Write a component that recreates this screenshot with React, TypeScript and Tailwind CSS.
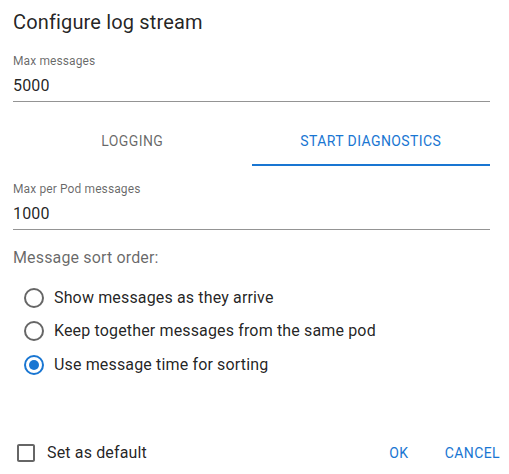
import React from "react";

function RadioIcon({ checked }: { checked: boolean }) {
  return (
    <svg width="24" height="24" viewBox="0 0 24 24" className="shrink-0">
      <circle
        cx="12"
        cy="12"
        r="9"
        fill="none"
        stroke={checked ? "#1976d2" : "rgba(0,0,0,0.6)"}
        strokeWidth="2"
      />
      {checked && <circle cx="12" cy="12" r="5" fill="#1976d2" />}
    </svg>
  );
}

function Field({ label, value }: { label: string; value: string }) {
  return (
    <div className="flex flex-col h-[48px] border-b border-black/[0.42]">
      <div className="text-[12px] leading-[14px] text-black/60 tracking-[0.00938em]">{label}</div>
      <div className="pt-[6px] text-[16px] leading-[23px] text-black/[0.87] tracking-[0.00938em]">{value}</div>
    </div>
  );
}

export default function App() {
  const options = [
    { label: "Show messages as they arrive", checked: false },
    { label: "Keep together messages from the same pod", checked: false },
    { label: "Use message time for sorting", checked: true },
  ];
  return (
    <div className="w-[509px] h-[474px] bg-white font-['Roboto',sans-serif] flex flex-col">
      <h2 className="pl-[13px] pt-[6px] text-[20px] leading-[32px] font-normal text-black/[0.87] tracking-[0.0075em]">
        Configure log stream
      </h2>
      <div className="pl-[13px] pr-[19px] flex flex-col">
        <div className="mt-[16px]">
          <Field label="Max messages" value="5000" />
        </div>
        <div className="mt-[16px] flex h-[48px]">
          <div className="flex-1 flex items-center justify-center pb-[1px] text-[14px] font-normal tracking-[0.02857em] text-black/60 uppercase">
            Logging
          </div>
          <div className="relative flex-1 flex items-center justify-center pb-[1px] text-[14px] font-normal tracking-[0.02857em] text-[#1976d2] uppercase">
            Start Diagnostics
            <span className="absolute left-0 right-0 bottom-0 h-[2px] bg-[#1976d2]" />
          </div>
        </div>
        <div className="mt-[16px]">
          <Field label="Max per Pod messages" value="1000" />
        </div>
        <div className="mt-[16px] text-[16px] leading-[23px] text-black/60 tracking-[0.00938em]">
          Message sort order:
        </div>
        <div className="mt-[12px] flex flex-col">
          {options.map((o) => (
            <div key={o.label} className="h-[33.5px] flex items-center pl-[9px] gap-[8px]">
              <RadioIcon checked={o.checked} />
              <span className="text-[16px] leading-[24px] text-black/[0.87] tracking-[0.00938em]">{o.label}</span>
            </div>
          ))}
        </div>
      </div>
      <div className="mt-auto mb-[3px] h-[36px] flex items-center pr-[1px]">
        <div className="flex items-center pl-[14px] gap-[9px]">
          <svg width="24" height="24" viewBox="0 0 24 24" className="shrink-0">
            <path
              fill="rgba(0,0,0,0.6)"
              d="M19 5v14H5V5h14m0-2H5c-1.11 0-2 .9-2 2v14c0 1.1.89 2 2 2h14c1.1 0 2-.9 2-2V5c0-1.1-.9-2-2-2z"
            />
          </svg>
          <span className="text-[16px] leading-[24px] text-black/[0.87] tracking-[0.00938em]">Set as default</span>
        </div>
        <div className="ml-auto flex items-center gap-[6px]">
          <button className="w-[64px] h-[36px] flex items-center justify-center text-[14px] font-normal tracking-[0.02857em] text-[#1976d2] uppercase">
            OK
          </button>
          <button className="min-w-[64px] h-[36px] px-[8px] flex items-center justify-center text-[14px] font-normal tracking-[0.02857em] text-[#1976d2] uppercase">
            Cancel
          </button>
        </div>
      </div>
    </div>
  );
}
